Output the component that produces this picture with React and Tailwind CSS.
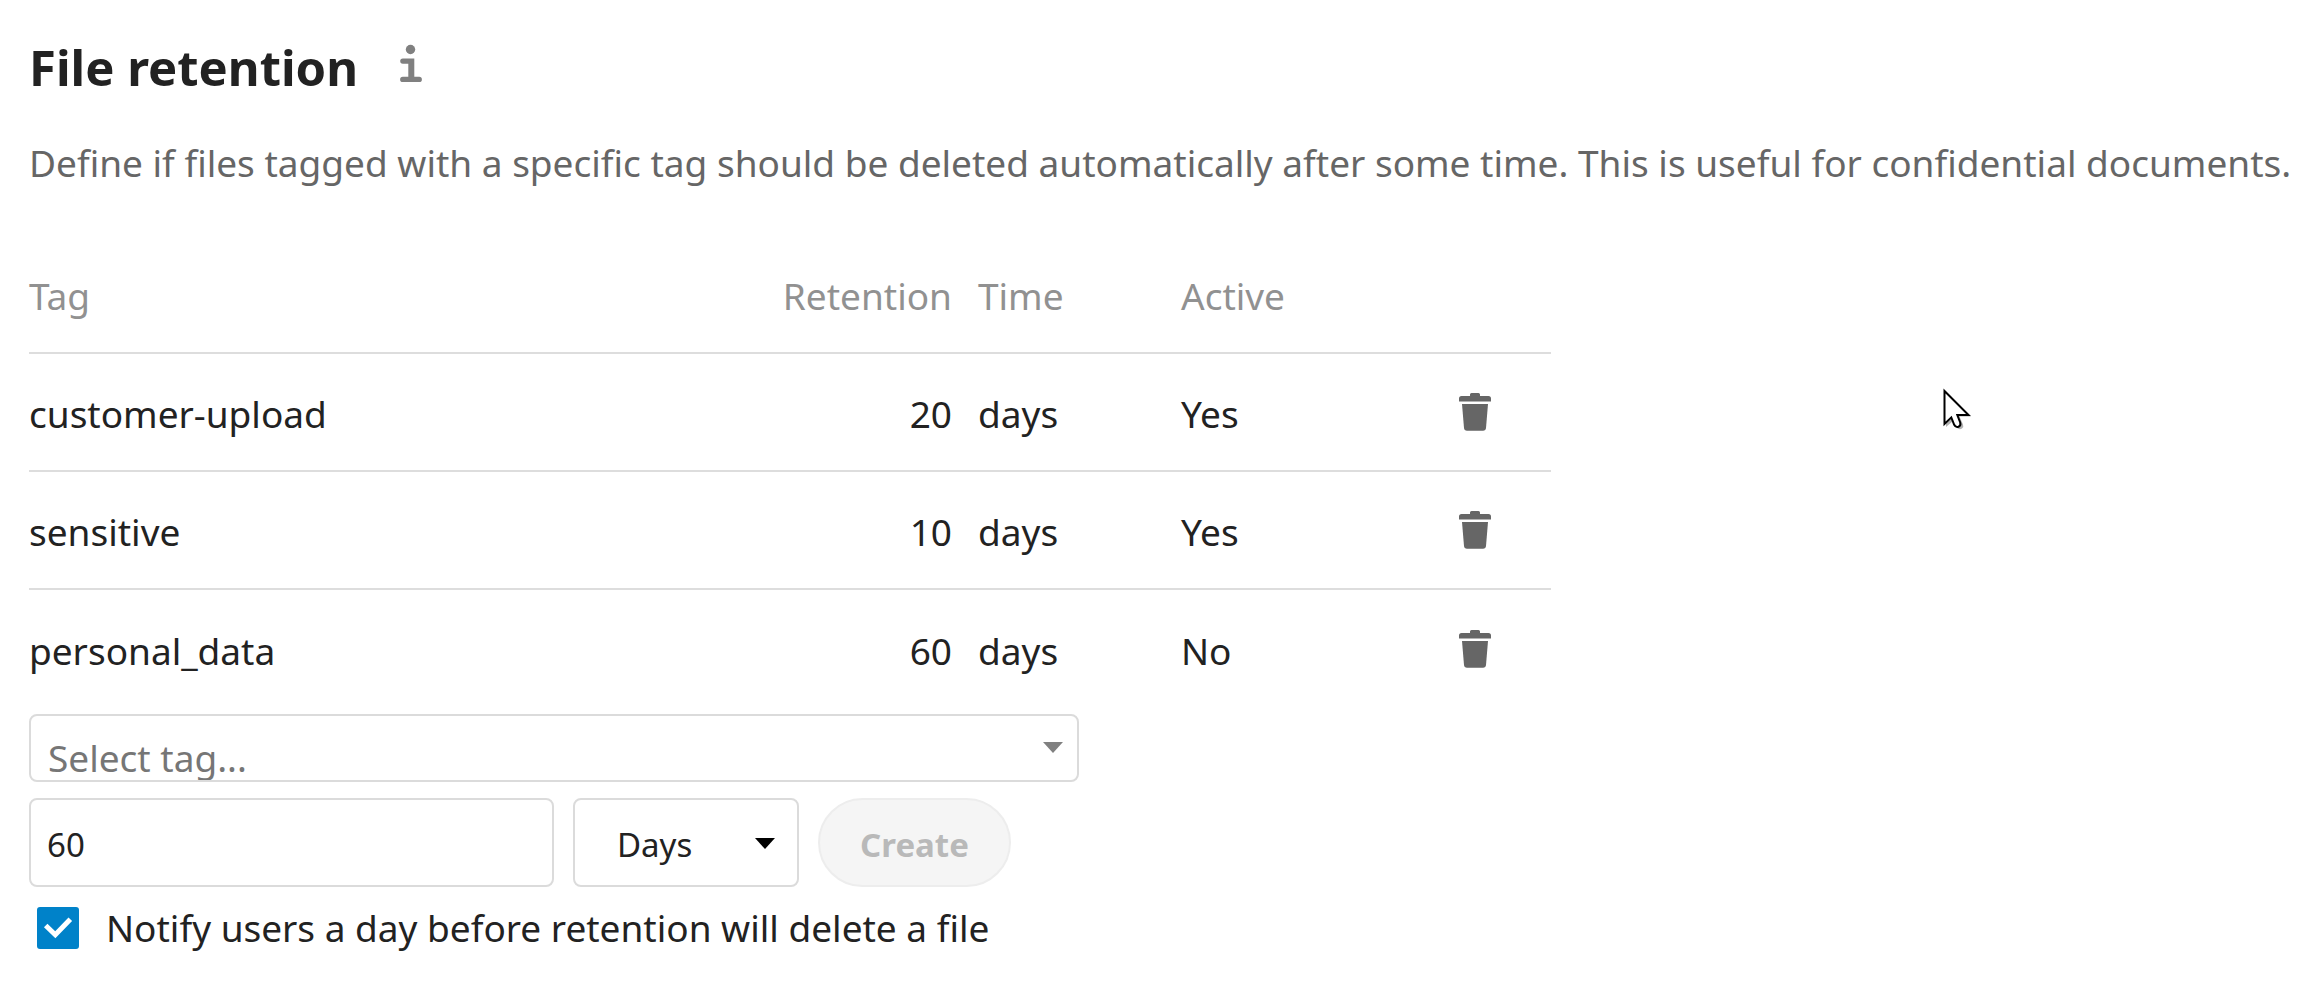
import React, { useState } from "react";

const rules = [
  { tag: "customer-upload", amount: 20, unit: "days", active: "Yes" },
  { tag: "sensitive", amount: 10, unit: "days", active: "Yes" },
  { tag: "personal_data", amount: 60, unit: "days", active: "No" },
];

function InfoIcon() {
  return (
    <svg className="block h-10 w-6" viewBox="0 0 24 40" fill="#808080" aria-hidden="true">
      <circle cx="11.500" cy="6.500" r="4.700" />
      <path d="M3.800 15.500H15.300V33.700H20.200a2.700 2.700 0 0 1 0 5.400H3.800a2.700 2.700 0 0 1 0-5.400H9.300V20.700H3.800a2.600 2.600 0 0 1 0-5.200z" />
    </svg>
  );
}

function TrashIcon() {
  return (
    <svg className="block h-[38px] w-8" viewBox="0 0 32 38" fill="#666" aria-hidden="true">
      <path d="M11 3V1.500Q11 0 12.500 0h7Q21 0 21 1.500V3h8.500Q32 3 32 5.500V8.500H0V5.500Q0 3 2.500 3z" />
      <path d="M3 11h26l-2 24q-.3 2.800-3 2.800H8q-2.700 0-3-2.800z" />
    </svg>
  );
}

function Caret({ className }) {
  return (
    <svg className={className} viewBox="0 0 20 11" fill="currentColor" aria-hidden="true">
      <path d="M0 0h20L10 11z" />
    </svg>
  );
}

function Pointer() {
  return (
    <svg className="pointer-events-none absolute left-[1940px] top-[386px] h-12 w-9" viewBox="0 0 36 48" aria-hidden="true">
      <path
        d="M6 6.500V41l7-6 3.500 6.500q3 3 5.500 1 2-1.500 1-4L19.500 30.500H31z"
        fill="#000"
        opacity=".3"
      />
      <path
        d="M4.500 5v33l6.800-6.600 2.900 7.400q1.500 3 4.300 2 2.700-1.300 1.700-4.300L17.300 29H28.500z"
        fill="#fff"
        stroke="#000"
        strokeWidth="2"
      />
    </svg>
  );
}

export default function App() {
  const [amount, setAmount] = useState("60");
  const [notify, setNotify] = useState(true);

  return (
    <main className="relative min-h-screen bg-white pb-8 pl-[29px] pr-4 pt-[35px] font-['Noto_Sans','Open_Sans',sans-serif] text-[37px] leading-[54px] text-[#222]">
      <div className="flex items-center gap-[41px]">
        <h2 className="text-[49px] font-bold leading-[64px]">File retention</h2>
        <a href="#info" aria-label="Open documentation" className="pb-2">
          <InfoIcon />
        </a>
      </div>
      <p className="mt-[37px] text-[#666]">
        Define if files tagged with a specific tag should be deleted automatically after some time. This is useful for confidential documents.
      </p>

      <table className="mt-[46px] w-[1522px] max-w-full table-fixed border-separate border-spacing-0 [&_td]:border-[#ddd] [&_th]:border-[#ddd]">
        <thead>
          <tr className="h-[118px] text-left text-[#919191] [&>th]:border-b-2 [&>th]:pt-1 [&>th]:font-normal">
            <th className="w-[740px]">Tag</th>
            <th className="w-[197px] pr-3.5 text-right">Retention</th>
            <th className="w-[203px] pl-3">Time</th>
            <th className="w-[266px] pl-3">Active</th>
            <th aria-label="Actions"></th>
          </tr>
        </thead>
        <tbody>
          {rules.map((rule) => (
            <tr key={rule.tag} className="h-[118px] [&:not(:last-child)>td]:border-b-2 [&>td:not(:last-child)]:pt-1">
              <td>{rule.tag}</td>
              <td className="pr-3.5 text-right">{rule.amount}</td>
              <td className="pl-3">{rule.unit}</td>
              <td className="pl-3">{rule.active}</td>
              <td className="pl-6">
                <button type="button" aria-label={`Delete ${rule.tag}`} className="block">
                  <TrashIcon />
                </button>
              </td>
            </tr>
          ))}
        </tbody>
      </table>

      <form className="mt-1.5" onSubmit={(e) => e.preventDefault()}>
        <div className="relative h-[68px] w-[1050px] max-w-full overflow-hidden rounded-lg border-2 border-[#dbdbdb]">
          <select aria-label="Select tag" defaultValue="" className="h-[84px] w-full appearance-none bg-transparent px-[17px] text-[#767676]">
            <option value="">Select tag...</option>
          </select>
          <Caret className="pointer-events-none absolute right-3.5 top-[26px] h-[11px] w-5 text-[#808080]" />
        </div>

        <div className="mt-4 flex gap-[19px] text-[33px] leading-[48px]">
          <input
            type="text"
            inputMode="numeric"
            aria-label="Retention time"
            value={amount}
            onChange={(e) => setAmount(e.target.value)}
            className="h-[89px] w-[525px] rounded-lg border-2 border-[#dbdbdb] px-4 pt-1"
          />
          <div className="relative">
            <select aria-label="Time unit" defaultValue="Days" className="h-[89px] w-[226px] appearance-none rounded-lg border-2 border-[#dbdbdb] bg-white pl-[42px] pr-12 pt-1">
              <option>Days</option>
              <option>Weeks</option>
              <option>Months</option>
              <option>Years</option>
            </select>
            <Caret className="pointer-events-none absolute right-6 top-10 h-[11px] w-5 text-black" />
          </div>
          <button type="submit" disabled className="h-[89px] w-[193px] rounded-full border-2 border-[#ededed] bg-[#f5f5f5] pt-1 font-bold text-[#b9b9b9]">
            Create
          </button>
        </div>

        <label className="mt-3.5 flex w-fit items-center pl-2">
          <span className="relative block size-[42px]">
            <input
              type="checkbox"
              checked={notify}
              onChange={(e) => setNotify(e.target.checked)}
              className="peer block size-full appearance-none rounded-[3px] border-2 border-[#878787] checked:border-[#0082c9] checked:bg-[#0082c9]"
            />
            <svg className="pointer-events-none absolute inset-0 hidden size-full peer-checked:block" viewBox="0 0 42 42" fill="none" stroke="#fff" strokeWidth="5" aria-hidden="true">
              <path d="M8.700 18.500 18.300 27.700 33.300 12.300" />
            </svg>
          </span>
          <span className="pl-[27px]">Notify users a day before retention will delete a file</span>
        </label>
      </form>

      <Pointer />
    </main>
  );
}
